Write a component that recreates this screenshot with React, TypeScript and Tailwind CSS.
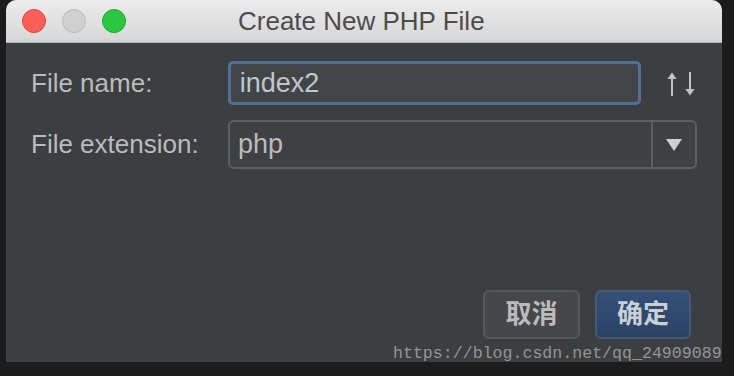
import React from 'react';

function ArrowsIcon() {
  return (
    <svg width="32" height="26" viewBox="0 0 32 26" fill="none" className="text-[#c4c4c4]">
      <path d="M7 25V3" stroke="currentColor" strokeWidth="2" />
      <path d="M2.5 8L7 1.5L11.5 8Z" fill="currentColor" />
      <path d="M25 1V23" stroke="currentColor" strokeWidth="2" />
      <path d="M20.5 18L25 24.5L29.5 18Z" fill="currentColor" />
    </svg>
  );
}

export default function App() {
  const font = { fontFamily: '"Liberation Sans", "Noto Sans CJK SC", sans-serif' };

  return (
    <div className="relative w-[734px] h-[376px] bg-[#1c1c1c] overflow-hidden" style={font}>
      <div className="ml-[6px] w-[716px] h-[362px] flex flex-col rounded-t-[10px] overflow-hidden bg-[#3c3f41]">
        {/* title bar */}
        <div className="relative h-[43px] flex items-center bg-gradient-to-b from-[#ececec] to-[#d6d6d6] border-b border-[#b4b4b4]">
          <div className="flex items-center gap-[16px] pl-[16px]">
            <span className="w-[24px] h-[24px] rounded-full bg-[#fc5f57] border border-[#e0443e]" />
            <span className="w-[24px] h-[24px] rounded-full bg-[#d0d0d0] border border-[#b9b9b9]" />
            <span className="w-[24px] h-[24px] rounded-full bg-[#2ac840] border border-[#1ea932]" />
          </div>
          <div className="absolute left-[232px] top-[6px] text-[26px] leading-[30px] text-[#4c4c4c]">
            Create New PHP File
          </div>
        </div>

        {/* form */}
        <div className="flex-1 flex flex-col pl-[25px] pr-[25px] pt-[18px]">
          <div className="flex items-center h-[44px]">
            <div className="w-[197px] text-[26px] text-[#bbbbbb]">File name:</div>
            <div className="w-[414px] h-[44px] rounded-[5px] border-[3px] border-[#4f7099] bg-[#424547] flex items-center pl-[9px] text-[27px] text-[#bfc6cf]">
              index2
            </div>
            <div className="ml-[24px] mt-[2px]">
              <ArrowsIcon />
            </div>
          </div>

          <div className="flex items-center h-[49px] mt-[15px]">
            <div className="w-[197px] text-[26px] text-[#bbbbbb]">File extension:</div>
            <div className="w-[469px] h-[49px] rounded-[6px] border-2 border-[#5d6062] bg-[#3e4143] flex">
              <div className="flex-1 flex items-center pl-[8px] text-[27px] text-[#bbbbbb]">php</div>
              <div className="w-[44px] border-l-2 border-[#5d6062] flex items-center justify-center">
                <svg width="16" height="12" viewBox="0 0 16 12">
                  <path d="M0 0H16L8 12Z" fill="#cfcfcf" />
                </svg>
              </div>
            </div>
          </div>

          <div className="flex-1" />

          <div className="flex justify-end gap-[15px] pr-[6px] pb-[23px]">
            <button className="w-[97px] h-[49px] rounded-[6px] border-2 border-[#555859] bg-[#45484a] text-[26px] font-semibold text-[#bbbbbb]">
              取消
            </button>
            <button className="w-[96px] h-[49px] rounded-[6px] border-2 border-[#465a75] bg-gradient-to-b from-[#34507a] to-[#2b4262] text-[26px] font-semibold text-[#c9cfd7]">
              确定
            </button>
          </div>
        </div>
      </div>

      {/* watermark */}
      <div
        className="absolute left-[393px] top-[342px] text-[16.6px] leading-[24px] text-[#d0d0d0]/60 whitespace-nowrap"
        style={{ fontFamily: '"Liberation Mono", monospace' }}
      >
        https://blog.csdn.net/qq_24909089
      </div>
    </div>
  );
}
